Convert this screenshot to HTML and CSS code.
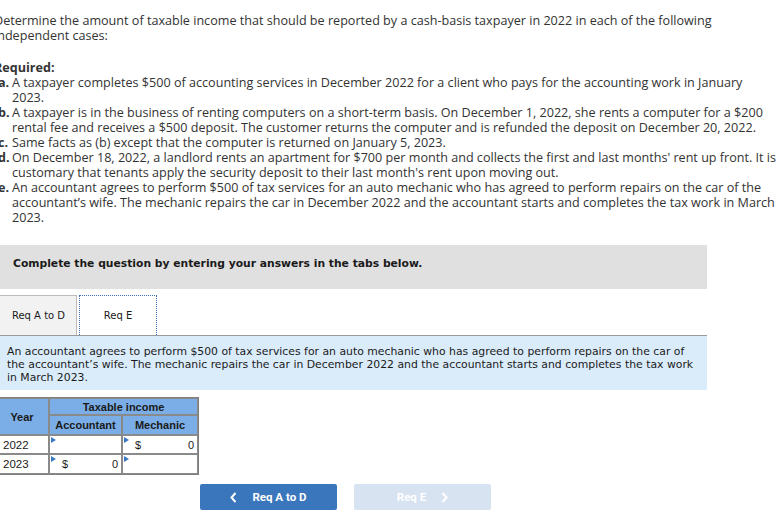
FILE: index.html
```html
<!DOCTYPE html>
<html lang="en">
<head>
  <meta charset="UTF-8">
  <title>Taxable Income - Req E</title>
  <link rel="stylesheet" href="styles.css">
</head>
<body>
  <div class="page">

    <!-- Question -->
    <div class="question">
      <p>Determine the amount of taxable income that should be reported by a cash-basis taxpayer in 2022 in each of the following<br>independent cases:</p>
      <p class="req-title">Required:</p>
      <ol class="cases">
        <li><b>a.</b>A taxpayer completes $500 of accounting services in December 2022 for a client who pays for the accounting work in January<br>2023.</li>
        <li><b>b.</b>A taxpayer is in the business of renting computers on a short-term basis. On December 1, 2022, she rents a computer for a $200<br>rental fee and receives a $500 deposit. The customer returns the computer and is refunded the deposit on December 20, 2022.</li>
        <li><b>c.</b>Same facts as (b) except that the computer is returned on January 5, 2023.</li>
        <li><b>d.</b>On December 18, 2022, a landlord rents an apartment for $700 per month and collects the first and last months' rent up front. It is<br>customary that tenants apply the security deposit to their last month's rent upon moving out.</li>
        <li><b>e.</b>An accountant agrees to perform $500 of tax services for an auto mechanic who has agreed to perform repairs on the car of the<br>accountant&rsquo;s wife. The mechanic repairs the car in December 2022 and the accountant starts and completes the tax work in March<br>2023.</li>
      </ol>
    </div>

    <!-- Instructions -->
    <div class="instructions">Complete the question by entering your answers in the tabs below.</div>

    <!-- Tabs -->
    <div class="tabs">
      <div class="tab">Req A to D</div>
      <div class="tab active">Req E</div>
    </div>
    <div class="tab-panel">
      An accountant agrees to perform $500 of tax services for an auto mechanic who has agreed to perform repairs on the car of the accountant&rsquo;s wife. The mechanic repairs the car in December 2022 and the accountant starts and completes the tax work in March 2023.
    </div>

    <!-- Answer table -->
    <table class="answers">
      <tr class="head-top">
        <th rowspan="2" class="col-year">Year</th>
        <th colspan="2">Taxable income</th>
      </tr>
      <tr class="head-sub">
        <th class="col-acc">Accountant</th>
        <th class="col-mech">Mechanic</th>
      </tr>
      <tr>
        <td class="year">2022</td>
        <td class="cell"><span class="flag"></span></td>
        <td class="cell"><span class="flag"></span><span class="cur">$</span><span class="val">0</span></td>
      </tr>
      <tr>
        <td class="year">2023</td>
        <td class="cell"><span class="flag"></span><span class="cur">$</span><span class="val">0</span></td>
        <td class="cell"><span class="flag"></span></td>
      </tr>
    </table>

    <!-- Navigation -->
    <div class="nav-buttons">
      <button class="nav-btn prev">
        <svg class="chev" width="7" height="11" viewBox="0 0 7 11"><polyline points="5.5,1 1.5,5.5 5.5,10" fill="none" stroke="#ffffff" stroke-width="2"/></svg>
        Req A to D
      </button>
      <button class="nav-btn next">
        Req E
        <svg class="chev" width="7" height="11" viewBox="0 0 7 11"><polyline points="1.5,1 5.5,5.5 1.5,10" fill="none" stroke="#ffffff" stroke-width="2"/></svg>
      </button>
    </div>

  </div>
</body>
</html>
```

FILE: styles.css
```css
* {
  margin: 0;
  padding: 0;
  box-sizing: border-box;
}
body {
  background-color: #ffffff;
  color: #333333;
  overflow: hidden;
}
.page {
  margin-left: -6px;
  width: 713px;
  padding-top: 13px;
}
.question {
  font-family: "Open Sans", Lato, sans-serif;
  font-size: 12.6px;
  line-height: 15px;
  color: #333333;
  white-space: nowrap;
}
.req-title {
  margin-top: 17px;
  font-weight: bold;
}
.cases {
  list-style: none;
}
.cases li {
  padding-left: 18px;
  text-indent: -14px;
}
.cases li b {
  display: inline-block;
  width: 14px;
  text-indent: 0;
}
.instructions {
  margin-top: 20px;
  height: 44px;
  padding: 12px 0 0 19px;
  background-color: #e0e0e0;
  font-family: "DejaVu Sans", Verdana, sans-serif;
  font-size: 10.75px;
  font-weight: bold;
  line-height: 14px;
  color: #1a1a1a;
}
.tabs {
  display: flex;
  gap: 2px;
  margin-top: 6px;
  height: 40px;
}
.tab {
  height: 40px;
  display: flex;
  align-items: center;
  justify-content: center;
  font-family: "DejaVu Sans", Verdana, sans-serif;
  font-size: 10px;
  color: #1a1a1a;
  background-color: #f2f2f2;
  border: 1px solid #bbbbbb;
  border-bottom: none;
  width: 83px;
  padding-left: 6px;
}
.tab.active {
  width: 78px;
  padding-left: 0;
  background-color: #ffffff;
  border: 1px dotted #3b6fb5;
  border-bottom: none;
}
.tab-panel {
  height: 55px;
  padding: 9px 12px 0 13px;
  background-color: #daecfa;
  border-top: 1px solid #9a9a9a;
  font-family: "DejaVu Sans", Verdana, sans-serif;
  font-size: 10.85px;
  line-height: 13px;
  color: #1a1a1a;
}
.answers {
  margin-top: 7px;
  border-collapse: separate;
  border-spacing: 0;
  border: 1px solid #7f7f7f;
  font-family: "Liberation Sans", Arial, sans-serif;
  font-size: 11px;
  color: #1a1a1a;
}
.answers th {
  background-color: #7baee6;
  border: 1px solid #8a8a8a;
  font-weight: bold;
  text-align: center;
}
.head-top th {
  height: 17px;
}
.head-sub th {
  height: 20px;
}
.col-year {
  width: 54px;
}
.col-acc {
  width: 73px;
}
.col-mech {
  width: 76px;
}
.answers td {
  border: 1px solid #8a8a8a;
  height: 19px;
  background-color: #ffffff;
}
.answers tr:last-child td {
  height: 20px;
}
.year {
  padding-left: 7px;
  font-size: 11.5px;
}
.cell {
  position: relative;
  padding: 0 3px 0 12px;
}
.flag {
  position: absolute;
  left: 1px;
  top: 1px;
  width: 0;
  height: 0;
  border-top: 3px solid transparent;
  border-bottom: 3px solid transparent;
  border-left: 5px solid #3b78c4;
}
.cur {
  float: left;
}
.val {
  float: right;
}
.nav-buttons {
  display: flex;
  gap: 17px;
  margin-top: 9px;
  padding-left: 206px;
}
.nav-btn {
  width: 137px;
  height: 26px;
  border: none;
  border-radius: 2px;
  color: #ffffff;
  font-family: Roboto, "Liberation Sans", sans-serif;
  font-size: 11.5px;
  font-weight: bold;
  display: flex;
  align-items: center;
  justify-content: center;
  gap: 15px;
}
.prev {
  background-color: #3a76bb;
}
.next {
  background-color: #d7e3f1;
}
```
